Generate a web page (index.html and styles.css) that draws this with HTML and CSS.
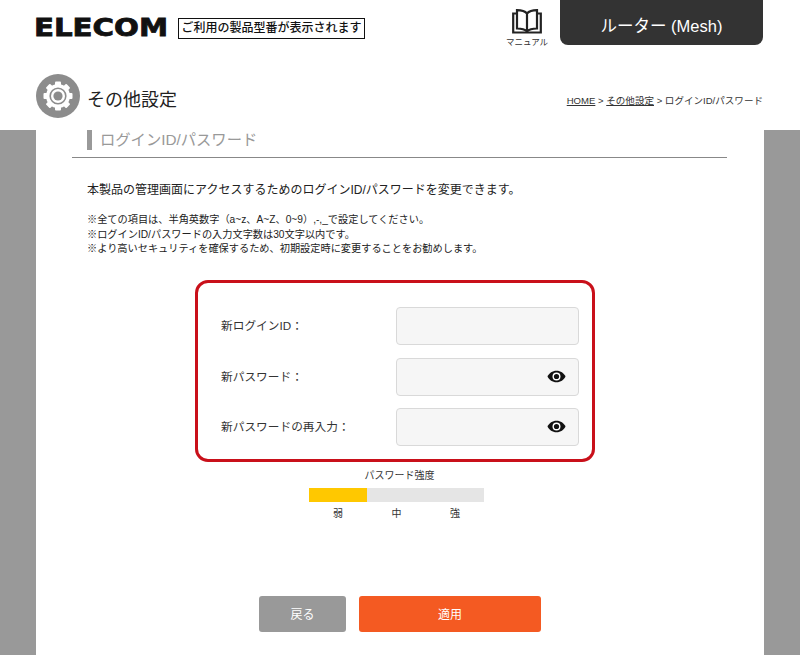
FILE: index.html
```html
<!DOCTYPE html>
<html lang="ja">
<head>
<meta charset="utf-8">
<title>ログインID/パスワード</title>
<link rel="stylesheet" href="styles.css">
</head>
<body>
<header class="header">
  <div class="top">
    <div class="brand"><span class="logo">ELECOM</span></div>
    <div class="model">ご利用の製品型番が表示されます</div>
    <a class="manual">
      <svg class="book" viewBox="0 0 30 25" width="30" height="25" fill="none" stroke="#222" stroke-width="2.2">
        <path d="M15 4.5C13 2.2 10 1.200 5 1.200V19.500C10 19.500 13 20.500 15 22.500C17 20.500 20 19.500 25 19.500V1.200C20 1.200 17 2.200 15 4.500V22.500"/>
        <path d="M5 4.500H1.200V23.500H28.800V4.500H25"/>
      </svg>
      <span>マニュアル</span>
    </a>
    <div class="tab">ルーター (Mesh)</div>
  </div>
  <div class="titlerow">
    <svg class="gear" viewBox="0 0 44 44" width="44" height="44">
      <circle cx="22" cy="22" r="22" fill="#8c8c8c"/>
      <g fill="#fff">
        <circle cx="22" cy="22" r="12"/>
        <rect x="19" y="7.500" width="6" height="29" rx="1"/>
        <rect x="19" y="7.500" width="6" height="29" rx="1" transform="rotate(45 22 22)"/>
        <rect x="19" y="7.500" width="6" height="29" rx="1" transform="rotate(90 22 22)"/>
        <rect x="19" y="7.500" width="6" height="29" rx="1" transform="rotate(135 22 22)"/>
      </g>
      <circle cx="22" cy="22" r="8.600" fill="#8c8c8c"/>
      <circle cx="22" cy="22" r="7" fill="#fff"/>
      <circle cx="22" cy="22" r="4.600" fill="#8c8c8c"/>
    </svg>
    <h1 class="title">その他設定</h1>
    <nav class="crumbs"><a>HOME</a> &gt; <a>その他設定</a> &gt; ログインID/パスワード</nav>
  </div>
</header>
<main class="panel">
  <h2 class="section"><span>ログインID/パスワード</span></h2>
  <p class="lead">本製品の管理画面にアクセスするためのログインID/パスワードを変更できます。</p>
  <ul class="notes">
    <li>※全ての項目は、半角英数字（a~z、A~Z、0~9）,-,_で設定してください。</li>
    <li>※ログインID/パスワードの入力文字数は30文字以内です。</li>
    <li>※より高いセキュリティを確保するため、初期設定時に変更することをお勧めします。</li>
  </ul>
  <form class="formbox">
    <label class="row"><span>新ログインID：</span><div class="field"></div></label>
    <label class="row"><span>新パスワード：</span><div class="field">
      <svg class="eye" viewBox="0 0 20 14" width="19" height="13"><path fill="#111" d="M10 .8C5.600.8 2 3.300.3 7 2 10.700 5.600 13.200 10 13.200S18 10.700 19.700 7C18 3.300 14.400.8 10 .8Z"/><circle cx="10" cy="7" r="4.300" fill="#fff"/><circle cx="10" cy="7" r="2.800" fill="#111"/></svg>
    </div></label>
    <label class="row"><span>新パスワードの再入力：</span><div class="field">
      <svg class="eye" viewBox="0 0 20 14" width="19" height="13"><path fill="#111" d="M10 .8C5.600.8 2 3.300.3 7 2 10.700 5.600 13.200 10 13.200S18 10.700 19.700 7C18 3.300 14.400.8 10 .8Z"/><circle cx="10" cy="7" r="4.300" fill="#fff"/><circle cx="10" cy="7" r="2.800" fill="#111"/></svg>
    </div></label>
  </form>
  <section class="strength">
    <div class="strength-title">パスワード強度</div>
    <div class="meter"><div class="meter-fill"></div></div>
    <div class="levels"><span>弱</span><span>中</span><span>強</span></div>
  </section>
  <div class="actions">
    <button class="btn back" type="button">戻る</button>
    <button class="btn apply" type="button">適用</button>
  </div>
</main>
</body>
</html>
```
FILE: styles.css
```css
* { box-sizing: border-box; }
html, body { margin: 0; height: 655px; overflow: hidden; }
body {
  background: #999;
  color: #222;
  font-family: "Liberation Sans", "Noto Sans CJK JP", sans-serif;
}
.header { background: #fff; height: 130px; padding: 0 37px 0 36px; }
.top { display: flex; height: 45px; }
.brand { width: 142px; padding-top: 13px; }
.logo {
  display: inline-block;
  margin-left: -2px;
  font: bold 25px/30px "DejaVu Sans", sans-serif;
  color: #111;
  -webkit-text-stroke: .8px #111;
  transform: scaleX(1.17);
  transform-origin: left center;
}
.model {
  align-self: flex-start;
  margin-top: 18px;
  width: 187px;
  height: 21px;
  border: 1px solid #111;
  font-size: 12px;
  font-weight: 500;
  line-height: 19px;
  text-align: center;
  white-space: nowrap;
  color: #111;
}
.manual {
  margin-left: auto;
  width: 50px;
  margin-right: 8px;
  padding-top: 9px;
  display: flex;
  flex-direction: column;
  align-items: center;
  font-size: 8.500px;
  color: #333;
  white-space: nowrap;
  height: 51px;
}
.book { flex: none; }
.manual span { margin-top: 2px; line-height: 12px; }
.tab {
  width: 203px;
  background: #333;
  color: #fff;
  border-radius: 0 0 8px 8px;
  font-size: 16.500px;
  text-align: center;
  padding-top: 15px;
  line-height: 22px;
}
.titlerow { display: flex; align-items: center; margin-top: 29px; height: 44px; }
.gear { flex: none; }
.title { margin: 3px 0 0 7px; font-size: 18px; font-weight: 400; color: #222; }
.crumbs { margin-left: auto; margin-top: 7px; font-size: 9.550px; color: #333; }
.crumbs a { text-decoration: underline; }
.panel {
  background: #fff;
  width: 728px;
  margin-left: 36px;
  height: 525px;
  padding: 0 37px 0 36px;
}
.section {
  margin: 0;
  height: 28px;
  border-bottom: 1px solid #888;
  padding-left: 15px;
  font-size: 15.300px;
  font-weight: 400;
  color: #999;
  line-height: 20px;
}
.section span { display: block; border-left: 5px solid #999; padding-left: 8px; height: 20px; }
.lead { margin: 24px 0 0 15px; font-size: 12px; line-height: 16px; color: #222; }
.notes {
  list-style: none;
  margin: 15px 0 0 15px;
  padding: 0;
  font-size: 10.200px;
  line-height: 14.500px;
  color: #222;
}
.formbox {
  width: 400px;
  height: 182px;
  margin: 23px 0 0 123px;
  border: 3px solid #c9101a;
  border-radius: 13px;
  padding: 24px 13px 0 23px;
  display: flex;
  flex-direction: column;
  gap: 13px;
}
.row { display: flex; align-items: center; justify-content: space-between; font-size: 11.700px; color: #333; }
.row span { margin-top: -2px; }
.row + .row + .row { margin-top: -1px; }
.field {
  width: 183px;
  height: 38px;
  background: #f6f6f6;
  border: 1px solid #d9d9d9;
  border-radius: 4px;
  display: flex;
  align-items: center;
  justify-content: flex-end;
  padding-right: 12px;
}
.strength { width: 175px; margin: 7px 0 0 237px; font-size: 10px; color: #333; text-align: center; }
.strength-title { line-height: 14px; white-space: nowrap; padding-left: 6px; }
.meter { height: 14px; margin-top: 5px; background: #e5e5e5; }
.meter-fill { width: 58px; height: 100%; background: #ffc800; }
.levels { display: flex; justify-content: space-between; padding: 0 24px; margin-top: 5px; line-height: 14px; }
.actions { display: flex; gap: 13px; margin: 75px 0 0 187px; }
.btn {
  height: 36px;
  border: 0;
  border-radius: 3px;
  color: #fff;
  font: 12px "Liberation Sans", "Noto Sans CJK JP", sans-serif;
}
.back { width: 87px; background: #999; }
.apply { width: 182px; background: #f45a22; }
```
